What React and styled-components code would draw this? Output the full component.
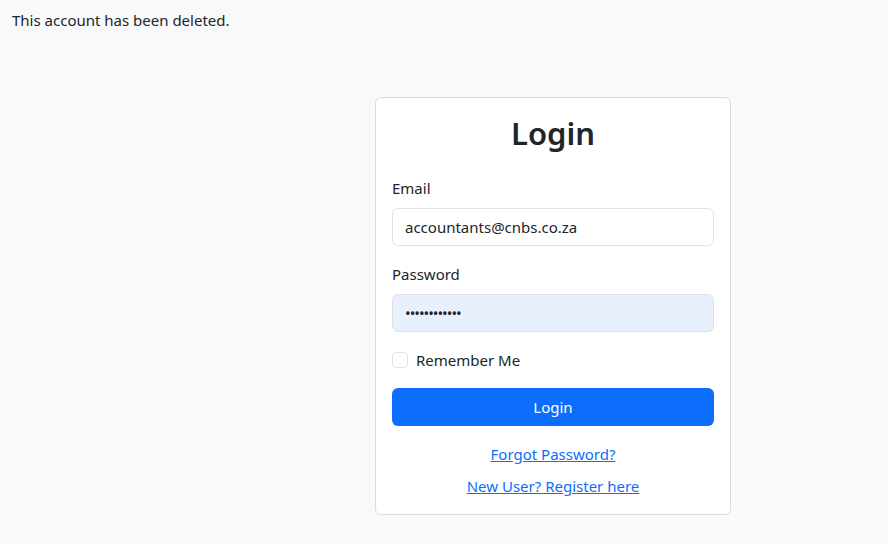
import React from "react";
import styled, { createGlobalStyle } from "styled-components";

const GlobalStyle = createGlobalStyle`
  html, body {
    margin: 0;
    padding: 0;
    background-color: #f8f9fa;
    color: #212529;
    font-family: "Noto Sans", "Open Sans", sans-serif;
    font-size: 15px;
    line-height: 24px;
  }
  * {
    box-sizing: border-box;
  }
`;

const Page = styled.div`
  min-height: 544px;
  display: flex;
  flex-direction: column;
`;

const Notice = styled.div`
  padding: 8px 12px 0;
  height: 32px;
`;

const Main = styled.main`
  display: flex;
  justify-content: center;
  padding: 65px 0 0 218px;
`;

const Card = styled.div`
  width: 356px;
  background-color: #fff;
  border: 1px solid #d9dcdf;
  border-radius: 6px;
  padding: 16px;
  display: flex;
  flex-direction: column;
`;

const Title = styled.h2`
  margin: 0 0 24px;
  height: 38px;
  font-size: 31px;
  line-height: 38px;
  font-weight: 600;
  text-align: center;
`;

const Field = styled.div`
  display: flex;
  flex-direction: column;
  gap: 8px;
  margin-bottom: 16px;
`;

const Label = styled.label`
  line-height: 24px;
`;

const Input = styled.input`
  height: 38px;
  width: 100%;
  padding: 0 12px;
  border: 1px solid #dee2e6;
  border-radius: 6px;
  font-family: inherit;
  font-size: 15px;
  color: #212529;
  background-color: ${props => (props.$filled ? "#e8f0fe" : "#fff")};
  outline: none;
  letter-spacing: ${props => (props.type === "password" ? "-1px" : "normal")};
`;

const CheckRow = styled.label`
  display: flex;
  align-items: center;
  gap: 8px;
  height: 24px;
  margin-bottom: 16px;
`;

const Box = styled.span`
  width: 16px;
  height: 16px;
  border: 1px solid #dee2e6;
  border-radius: 4px;
  background-color: #fff;
`;

const Button = styled.button`
  height: 38px;
  border: none;
  border-radius: 6px;
  background-color: #0d6efd;
  color: #fff;
  font-family: inherit;
  font-size: 15px;
  cursor: pointer;
  margin-bottom: 16px;
`;

const Links = styled.div`
  display: flex;
  flex-direction: column;
  align-items: center;
  gap: 8px;
`;

const Link = styled.a`
  color: #0d6efd;
  text-decoration: underline;
  line-height: 24px;
`;

function App() {
  return (
    <Page>
      <GlobalStyle />
      <Notice>This account has been deleted.</Notice>
      <Main>
        <Card>
          <Title>Login</Title>
          <Field>
            <Label>Email</Label>
            <Input type="text" defaultValue="accountants@cnbs.co.za" />
          </Field>
          <Field>
            <Label>Password</Label>
            <Input type="password" defaultValue="aaaaaaaaaaaa" $filled />
          </Field>
          <CheckRow>
            <Box />
            Remember Me
          </CheckRow>
          <Button>Login</Button>
          <Links>
            <Link href="#">Forgot Password?</Link>
            <Link href="#">New User? Register here</Link>
          </Links>
        </Card>
      </Main>
    </Page>
  );
}

export default App;
